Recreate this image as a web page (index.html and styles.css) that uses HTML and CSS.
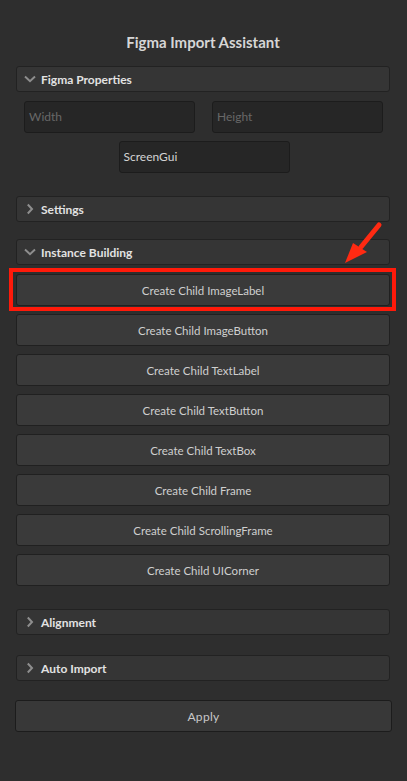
FILE: index.html
```html
<!DOCTYPE html>
<html>
<head>
<meta charset="utf-8">
<link rel="stylesheet" href="styles.css">
</head>
<body>
<div class="panel">
  <h1 class="title">Figma Import Assistant</h1>

  <div class="section-header"><span class="chev"><svg width="12" height="12" viewBox="0 0 12 12"><path d="M1 3.6 L6 8.2 L11 3.6" fill="none" stroke="#8e8e8e" stroke-width="2"/></svg></span>Figma Properties</div>
  <div class="props">
    <div class="input-row">
      <div class="input placeholder">Width</div>
      <div class="input placeholder">Height</div>
    </div>
    <div class="input-row center">
      <div class="input">ScreenGui</div>
    </div>
  </div>

  <div class="section-header gap-lg"><span class="chev"><svg width="12" height="12" viewBox="0 0 12 12"><path d="M3.8 1.5 L8 6 L3.8 10.5" fill="none" stroke="#8e8e8e" stroke-width="2"/></svg></span>Settings</div>

  <div class="section-header gap-md"><span class="chev"><svg width="12" height="12" viewBox="0 0 12 12"><path d="M1 3.6 L6 8.2 L11 3.6" fill="none" stroke="#8e8e8e" stroke-width="2"/></svg></span>Instance Building</div>
  <div class="buttons">
    <div class="btn highlighted">Create Child ImageLabel</div>
    <div class="btn">Create Child ImageButton</div>
    <div class="btn">Create Child TextLabel</div>
    <div class="btn">Create Child TextButton</div>
    <div class="btn">Create Child TextBox</div>
    <div class="btn">Create Child Frame</div>
    <div class="btn">Create Child ScrollingFrame</div>
    <div class="btn">Create Child UICorner</div>
  </div>

  <div class="section-header gap-lg"><span class="chev"><svg width="12" height="12" viewBox="0 0 12 12"><path d="M3.8 1.5 L8 6 L3.8 10.5" fill="none" stroke="#8e8e8e" stroke-width="2"/></svg></span>Alignment</div>
  <div class="section-header gap-auto"><span class="chev"><svg width="12" height="12" viewBox="0 0 12 12"><path d="M3.8 1.5 L8 6 L3.8 10.5" fill="none" stroke="#8e8e8e" stroke-width="2"/></svg></span>Auto Import</div>

  <div class="apply">Apply</div>

  <svg class="arrow" width="50" height="50" viewBox="0 0 50 50">
    <path d="M38 4 L20 26" stroke="#ff2a12" stroke-width="5" stroke-linecap="round"/>
    <path d="M4 42 L12 22 L26 31 Z" fill="#ff2a12"/>
  </svg>
</div>
</body>
</html>
```
FILE: styles.css
```css
* { box-sizing: border-box; }
html, body {
  margin: 0;
  padding: 0;
  background: #2e2e2e;
  height: 100%;
}
body {
  font-family: Lato, "Liberation Sans", sans-serif;
  color: #d0d0d0;
}
.panel {
  position: relative;
  padding: 33px 17px 0 16px;
  min-height: 781px;
}
.title {
  margin: 0;
  font-size: 15px;
  font-weight: 700;
  color: #d6d6d6;
  text-align: center;
  height: 18px;
  line-height: 18px;
  margin-bottom: 15px;
}
.section-header {
  display: flex;
  align-items: center;
  height: 26px;
  background: #353535;
  border: 1px solid #222222;
  border-radius: 3px;
  font-size: 12px;
  font-weight: 700;
  color: #e2e2e2;
  padding-left: 7px;
}
.chev {
  display: inline-flex;
  width: 12px;
  height: 12px;
  margin-right: 5px;
}
.gap-lg { margin-top: 23px; }
.gap-md { margin-top: 17px; }
.gap-auto { margin-top: 20px; }
.props {
  padding: 9px 7px 0 8px;
  display: flex;
  flex-direction: column;
  gap: 8px;
}
.input-row {
  display: flex;
  justify-content: space-between;
}
.input-row.center { justify-content: center; padding-left: 1px; }
.input {
  width: 171px;
  height: 32px;
  background: #262626;
  border: 1px solid #1c1c1c;
  border-radius: 3px;
  font-size: 12px;
  line-height: 30px;
  padding-left: 4px;
  color: #d4d4d4;
}
.input.placeholder { color: #686868; }
.buttons {
  margin-top: 9px;
  display: flex;
  flex-direction: column;
  gap: 8px;
}
.btn {
  height: 32px;
  background: #3a3a3a;
  border: 1px solid #202020;
  border-radius: 3px;
  font-size: 11.5px;
  color: #cfcfcf;
  display: flex;
  align-items: center;
  justify-content: center;
}
.btn.highlighted { position: relative; }
.btn.highlighted::after {
  content: "";
  position: absolute;
  left: -8px;
  right: -7px;
  top: -7px;
  bottom: -6px;
  border: 4px solid #ff1a0a;
}
.apply {
  margin: 19px -2px 0 -1px;
  height: 32px;
  background: #383838;
  border: 1px solid #1c1c1c;
  border-radius: 3px;
  font-size: 12px;
  color: #c8c8c8;
  display: flex;
  align-items: center;
  justify-content: center;
  letter-spacing: 0.3px;
}
.arrow {
  position: absolute;
  left: 341px;
  top: 221px;
}
```
